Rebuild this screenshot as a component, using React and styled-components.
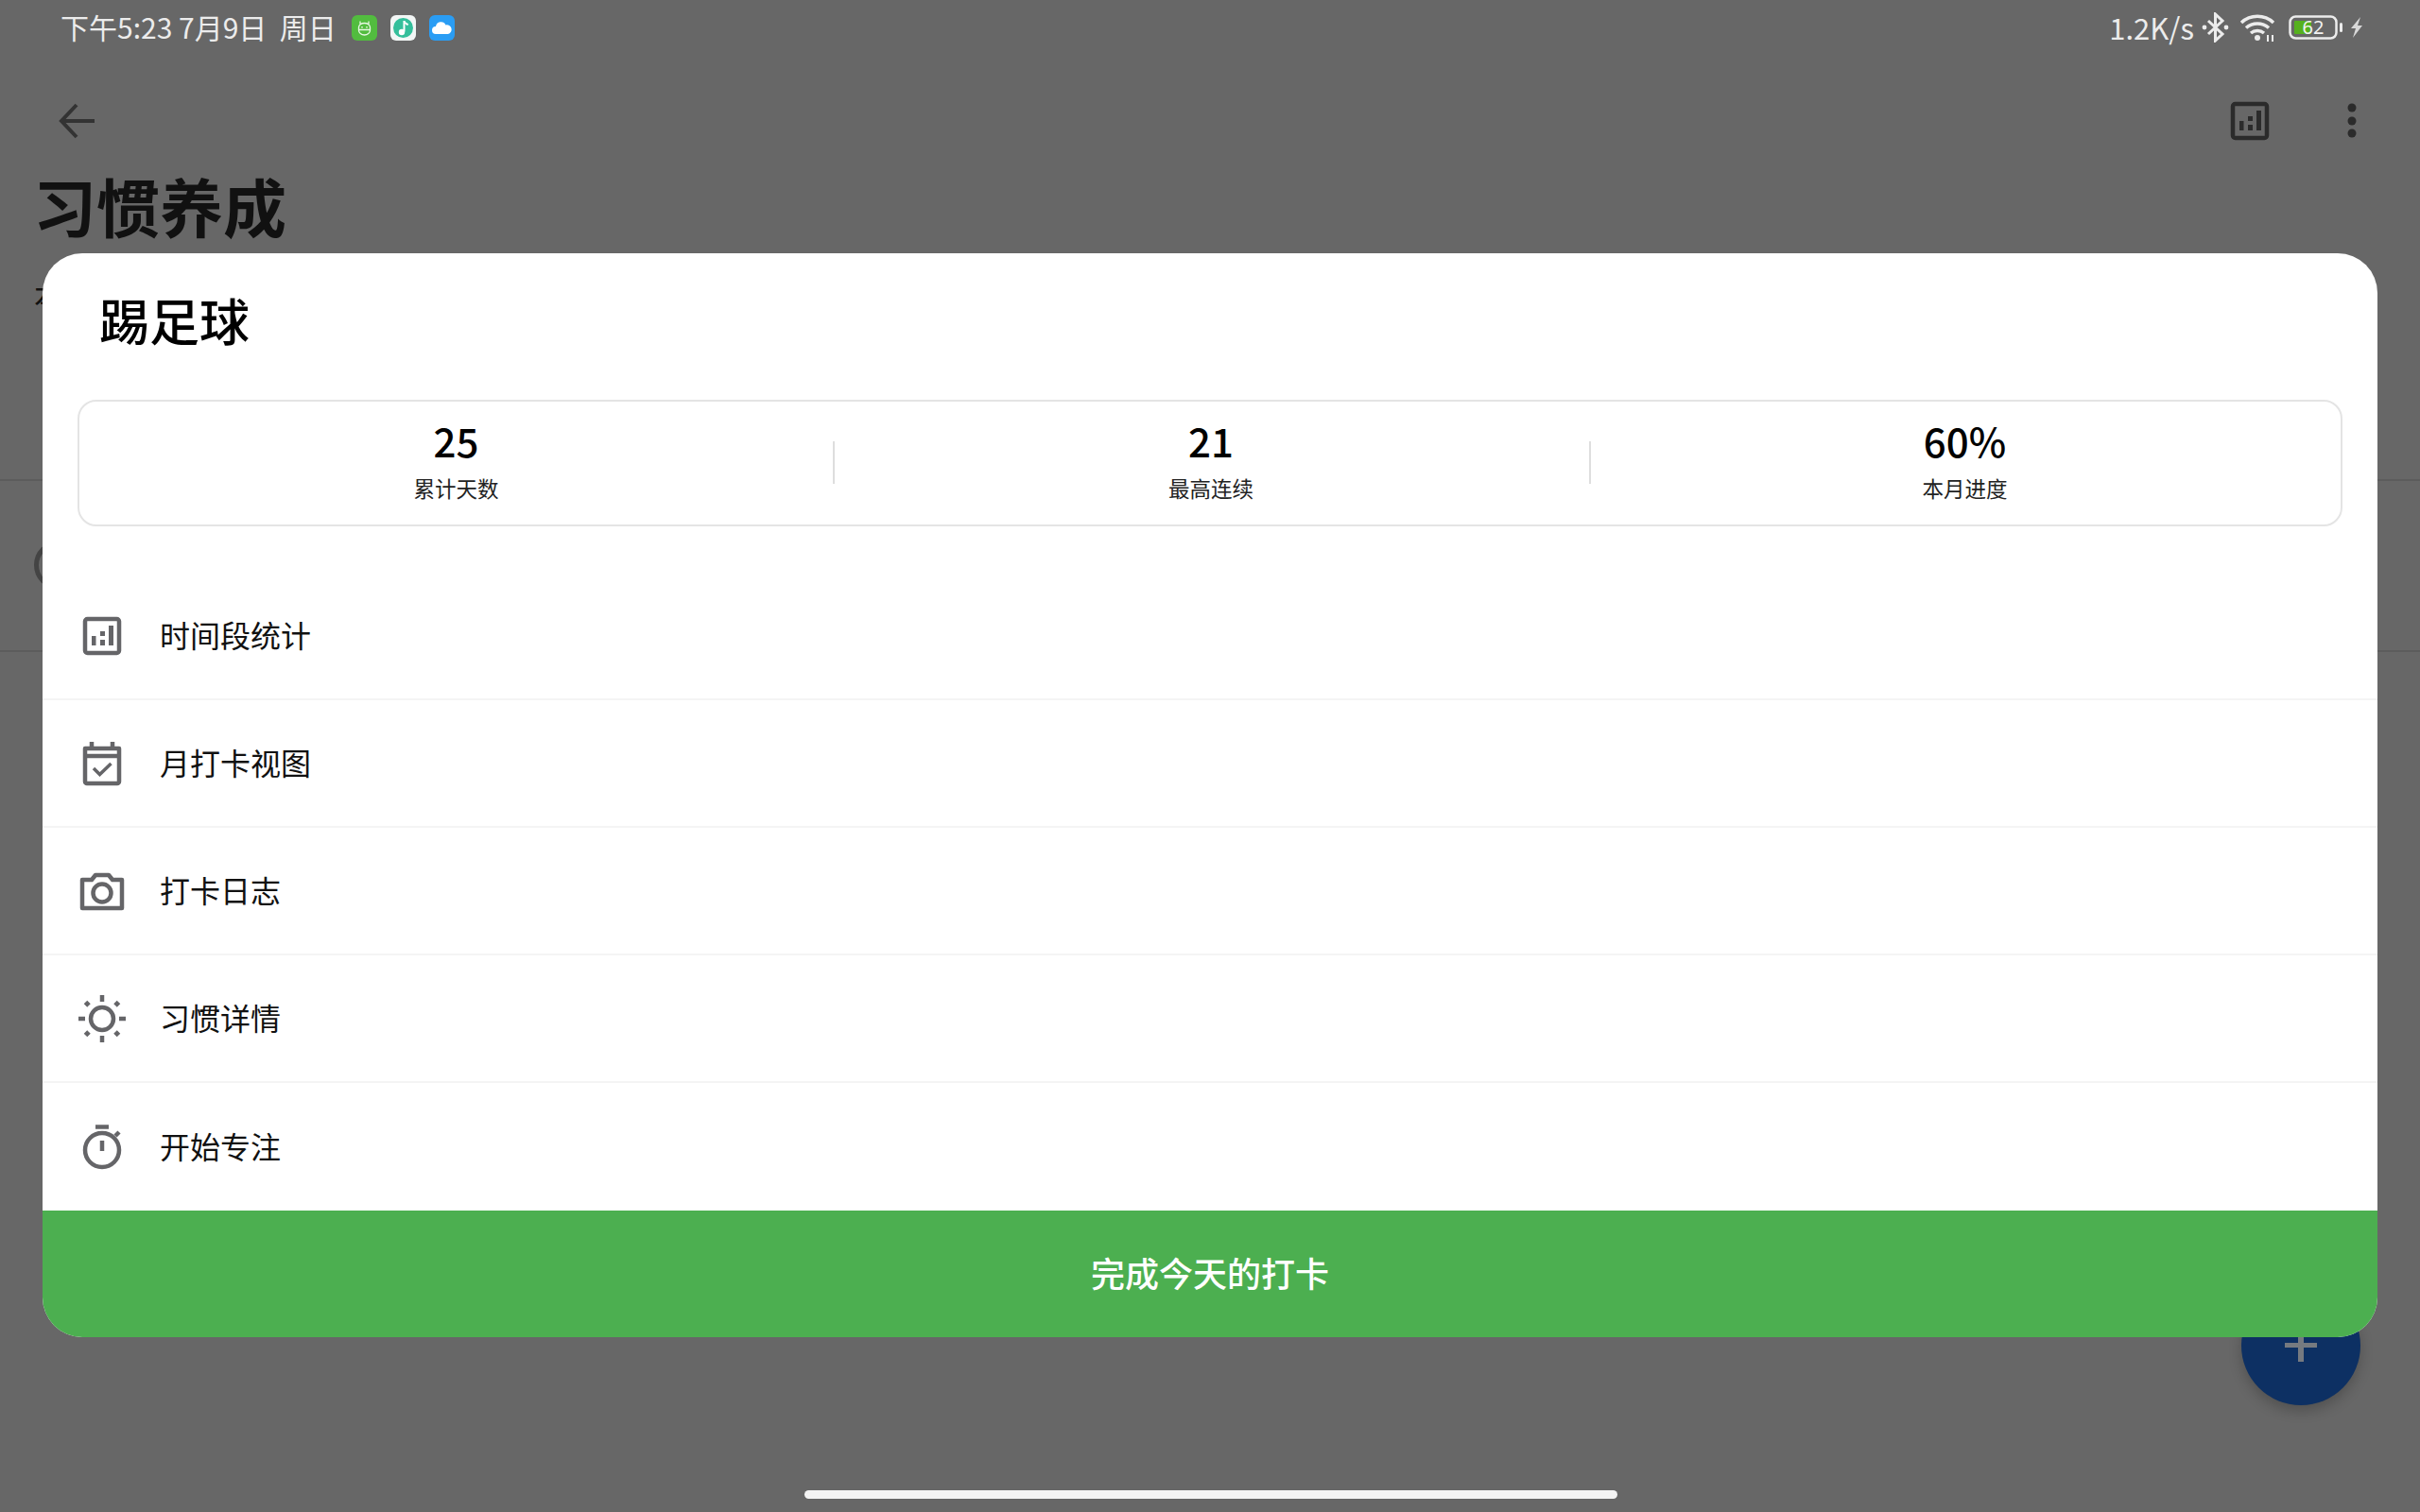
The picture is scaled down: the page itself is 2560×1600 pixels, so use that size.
import React from 'react'
import styled, { createGlobalStyle } from 'styled-components'

const CJK = `'Noto Sans CJK SC', 'Noto Sans', sans-serif`

const GlobalStyle = createGlobalStyle`
  html, body { margin: 0; padding: 0; }
  body { background: #676767; font-family: ${CJK}; }
`

const Page = styled.div`
  position: relative;
  width: 2560px;
  height: 1600px;
  overflow: hidden;
  background: #676767;
`

const StatusBar = styled.div`
  height: 58px;
  padding: 0 61px 0 64px;
  display: flex;
  align-items: center;
  justify-content: space-between;
  color: #ececec;
  font-size: 30px;
  box-sizing: border-box;
`

const StatusGroup = styled.div`
  display: flex;
  align-items: center;
  gap: ${p => p.$gap || 0}px;
`

const AppIcon = styled.svg`
  width: 27px;
  height: 27px;
  display: block;
`

const DateText = styled.span`
  margin: 0 2px 3px 0;
  white-space: pre;
`

const Speed = styled.span`
  margin-bottom: 2px;
  font-size: 31px;
`

const Toolbar = styled.div`
  height: 76px;
  margin-top: 32px;
  padding: 0 61px 0 60px;
  display: flex;
  align-items: center;
  justify-content: space-between;
`

const ToolbarActions = styled.div`
  display: flex;
  align-items: center;
  gap: 71px;
`

const Title = styled.h1`
  margin: 6px 0 0 35px;
  font-size: 67px;
  line-height: 90px;
  font-weight: 700;
  color: #111;
`

const Subtitle = styled.div`
  margin: 27px 0 0 36px;
  font-size: 32px;
  line-height: 44px;
  color: #111;
`

const BackRule = styled.div`
  height: 2px;
  background: #5c5c5c;
  margin-top: ${p => p.$top}px;
`

const BackRing = styled.div`
  width: 52px;
  height: 52px;
  margin: 63px 0 0 36px;
  border: 5px solid #444;
  border-radius: 50%;
  box-sizing: border-box;
`

const Fab = styled.div`
  position: absolute;
  left: 2371px;
  top: 1361px;
  width: 126px;
  height: 126px;
  border-radius: 50%;
  background: #0d3063;
  box-shadow: 0 6px 14px rgba(0, 0, 0, 0.22);
  display: flex;
  align-items: center;
  justify-content: center;
`

const Sheet = styled.section`
  position: absolute;
  left: 45px;
  top: 268px;
  width: 2470px;
  height: 1147px;
  background: #fff;
  border-radius: 42px;
  overflow: hidden;
  display: flex;
  flex-direction: column;
`

const SheetTitle = styled.h2`
  margin: 0;
  padding: 36px 0 0 60px;
  height: 155px;
  box-sizing: border-box;
  font-size: 53px;
  line-height: 68px;
  font-weight: 500;
  color: #000;
`

const StatsCard = styled.div`
  margin: 0 37px;
  height: 134px;
  box-sizing: border-box;
  border: 2px solid #e4e4e4;
  border-radius: 20px;
  display: grid;
  grid-template-columns: 797px 800px 1fr;
`

const Stat = styled.div`
  padding-top: 12px;
  display: flex;
  flex-direction: column;
  align-items: center;
  position: relative;
  & + &::before {
    content: '';
    position: absolute;
    left: 0;
    top: 42px;
    height: 45px;
    width: 2px;
    background: #dedede;
  }
`

const StatValue = styled.div`
  font-size: 42px;
  line-height: 58px;
  font-weight: 500;
  color: #000;
`

const StatLabel = styled.div`
  margin-top: 6px;
  font-size: 22.5px;
  line-height: 30px;
  color: #222;
`

const Menu = styled.div`
  flex: 1;
  margin-top: 49px;
  display: flex;
  flex-direction: column;
`

const MenuRow = styled.div`
  height: 135px;
  padding-left: 35px;
  display: flex;
  align-items: center;
  gap: 33px;
  box-sizing: border-box;
  border-bottom: 2px solid #f4f4f4;
  &:last-child { border-bottom: none; }
`

const MenuIcon = styled.svg`
  width: 56px;
  height: 56px;
  display: block;
  color: #656568;
`

const MenuText = styled.span`
  margin-bottom: 3px;
  font-size: 32px;
  color: #111;
`

const CheckInButton = styled.button`
  height: 134px;
  flex: none;
  border: none;
  padding: 0 0 4px;
  background: #4caf50;
  color: #fff;
  font-family: ${CJK};
  font-size: 36px;
  font-weight: 500;
`

const HomeBar = styled.div`
  position: absolute;
  left: 851px;
  top: 1577px;
  width: 860px;
  height: 9px;
  border-radius: 5px;
  background: #f4f4f4;
`

const StatsGlyph = ({ color = 'currentColor' }) => (
  <svg width="56" height="56" viewBox="0 0 56 56" fill="none" style={{ display: 'block', color }}>
    <rect x="10" y="10" width="36" height="36" rx="2.5" stroke="currentColor" strokeWidth="4.5" />
    <rect x="17" y="28" width="4.5" height="10" fill="currentColor" />
    <rect x="26" y="23" width="5" height="5" fill="currentColor" />
    <rect x="26" y="32" width="5" height="6" fill="currentColor" />
    <rect x="35" y="17" width="5" height="21" fill="currentColor" />
  </svg>
)

const CalendarIcon = () => (
  <MenuIcon viewBox="0 0 56 56" fill="none">
    <path d="M10 12h36v35a2 2 0 0 1-2 2H12a2 2 0 0 1-2-2z" stroke="currentColor" strokeWidth="4.5" strokeLinejoin="round" />
    <path d="M10 20h36" stroke="currentColor" strokeWidth="4.5" />
    <path d="M17 5v7M39 5v7" stroke="currentColor" strokeWidth="4.5" />
    <path d="M19 33l6.5 6.5L37.5 28" stroke="currentColor" strokeWidth="3.5" />
  </MenuIcon>
)

const CameraIcon = () => (
  <MenuIcon viewBox="0 0 56 56" fill="none">
    <path d="M7 16h10l4-5h14l4 5h10v30H7z" stroke="currentColor" strokeWidth="4.5" strokeLinejoin="round" />
    <circle cx="28" cy="30" r="9.5" stroke="currentColor" strokeWidth="4.5" />
  </MenuIcon>
)

const SunIcon = () => (
  <MenuIcon viewBox="0 0 56 56" fill="none">
    <circle cx="28" cy="28" r="12" stroke="currentColor" strokeWidth="4.5" />
    <path d="M28 3v7M28 46v7M3 28h7M46 28h7" stroke="currentColor" strokeWidth="4.5" />
    <path d="M10.5 10.5l3.5 3.5M42 42l3.5 3.5M45.5 10.5L42 14M14 42l-3.5 3.5" stroke="currentColor" strokeWidth="5" />
  </MenuIcon>
)

const TimerIcon = () => (
  <MenuIcon viewBox="0 0 56 56" fill="none">
    <circle cx="28" cy="31" r="18" stroke="currentColor" strokeWidth="4.5" />
    <path d="M21 6.5h14M28 21v11M42 16l4-4" stroke="currentColor" strokeWidth="4.5" />
  </MenuIcon>
)

const menuItems = [
  { label: '时间段统计', icon: <StatsGlyph color="#656568" /> },
  { label: '月打卡视图', icon: <CalendarIcon /> },
  { label: '打卡日志', icon: <CameraIcon /> },
  { label: '习惯详情', icon: <SunIcon /> },
  { label: '开始专注', icon: <TimerIcon /> },
]

const stats = [
  { value: '25', label: '累计天数' },
  { value: '21', label: '最高连续' },
  { value: '60%', label: '本月进度' },
]

export default function App() {
  return (
    <Page>
      <GlobalStyle />
      <StatusBar>
        <StatusGroup $gap={14}>
          <DateText>下午5:23 7月9日  周日</DateText>
          <AppIcon viewBox="0 0 27 27">
            <rect width="27" height="27" rx="6" fill="#52bc3f" />
            <path d="M9 6.5v3M18 6.5v3M7.5 13a6 4.5 0 0 1 12 0v3a6 5 0 0 1-12 0zM7.5 15.5h12" stroke="#e8f7e4" strokeWidth="1.3" fill="none" />
            <circle cx="11" cy="12.8" r="0.9" fill="#e8f7e4" />
            <circle cx="16" cy="12.8" r="0.9" fill="#e8f7e4" />
          </AppIcon>
          <AppIcon viewBox="0 0 27 27">
            <rect width="27" height="27" rx="6" fill="#f2f6f5" />
            <circle cx="13.5" cy="13.5" r="10.5" fill="#34bf9b" />
            <path d="M14.5 6v11.5" stroke="#fff" strokeWidth="2" />
            <circle cx="12" cy="18" r="3.2" fill="#fff" />
            <path d="M14.5 6.500c1 2.500 3 2.500 4 4" stroke="#fff" strokeWidth="2" fill="none" />
          </AppIcon>
          <AppIcon viewBox="0 0 27 27">
            <rect width="27" height="27" rx="6" fill="#2a9df4" />
            <path d="M7 20a4 4 0 0 1 0-8 5.5 5.5 0 0 1 10.5-1.5A4.7 4.7 0 0 1 20 20z" fill="#fff" />
          </AppIcon>
        </StatusGroup>
        <StatusGroup>
          <Speed>1.2K/s</Speed>
          <svg width="30" height="32" viewBox="0 0 30 32" fill="none" style={{ marginLeft: 8 }}>
            <path d="M7 9l15 14-7.5 7V2L22 9 7 23" stroke="#ececec" strokeWidth="3" />
            <circle cx="3" cy="16" r="2.4" fill="#ececec" />
            <circle cx="26" cy="16" r="2.4" fill="#ececec" />
          </svg>
          <svg width="40" height="32" viewBox="0 0 40 32" fill="none" style={{ marginLeft: 10 }}>
            <path d="M2 11a25 25 0 0 1 34 0M7 16.5a18 18 0 0 1 24 0M12 22a11 11 0 0 1 14 0" stroke="#ececec" strokeWidth="3.5" />
            <circle cx="19" cy="27" r="3" fill="#ececec" />
            <path d="M30 24v7M35 24v7" stroke="#ececec" strokeWidth="2" />
          </svg>
          <svg width="78" height="28" viewBox="0 0 78 28" fill="none" style={{ marginLeft: 12 }}>
            <rect x="1.5" y="2.5" width="49" height="23" rx="6" stroke="#ececec" strokeWidth="2.5" />
            <rect x="6" y="7" width="18" height="14" rx="1" fill="#56b11e" />
            <text x="26" y="21" fontSize="20" fill="#f2f2f2" textAnchor="middle" fontFamily="'Noto Sans', sans-serif">62</text>
            <rect x="54" y="9" width="3" height="10" rx="1.5" fill="#ececec" />
            <path d="M76 3l-10 12h5l-3 10 10-13h-5z" fill="#d8d8d8" />
          </svg>
        </StatusGroup>
      </StatusBar>
      <Toolbar>
        <svg width="44" height="44" viewBox="0 0 44 44" fill="none">
          <path d="M40 22H7M21 5L5 22l16 17" stroke="#333" strokeWidth="4" />
        </svg>
        <ToolbarActions>
          <StatsGlyph color="#2b2b2b" />
          <svg width="20" height="44" viewBox="0 0 20 44" fill="#2b2b2b">
            <circle cx="9" cy="8" r="4.5" />
            <circle cx="9" cy="22" r="4.5" />
            <circle cx="9" cy="35" r="4.5" />
          </svg>
        </ToolbarActions>
      </Toolbar>
      <Title>习惯养成</Title>
      <Subtitle>本</Subtitle>
      <BackRule $top={174} />
      <BackRing />
      <BackRule $top={64} />
      <Fab>
        <svg width="34" height="34" viewBox="0 0 34 34" fill="#767a80">
          <rect x="14" y="0" width="6" height="34" />
          <rect x="0" y="14" width="34" height="5" />
        </svg>
      </Fab>
      <Sheet>
        <SheetTitle>踢足球</SheetTitle>
        <StatsCard>
          {stats.map(s => (
            <Stat key={s.label}>
              <StatValue>{s.value}</StatValue>
              <StatLabel>{s.label}</StatLabel>
            </Stat>
          ))}
        </StatsCard>
        <Menu>
          {menuItems.map(item => (
            <MenuRow key={item.label}>
              {item.icon}
              <MenuText>{item.label}</MenuText>
            </MenuRow>
          ))}
        </Menu>
        <CheckInButton>完成今天的打卡</CheckInButton>
      </Sheet>
      <HomeBar />
    </Page>
  )
}
